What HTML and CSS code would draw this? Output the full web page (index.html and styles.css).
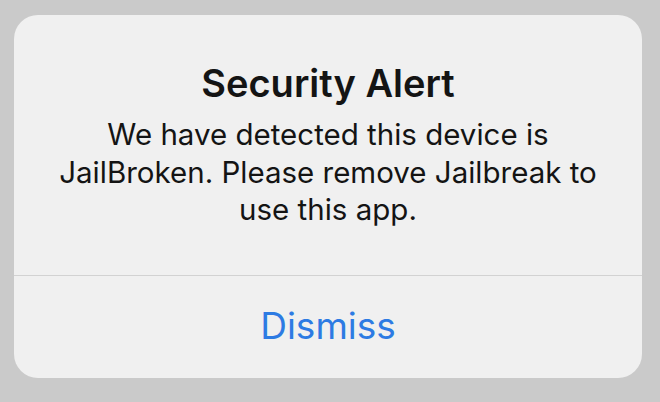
FILE: index.html
```html
<!DOCTYPE html>
<html>
<head>
<meta charset="utf-8">
<link rel="stylesheet" href="styles.css">
</head>
<body>
<div class="alert">
  <div class="alert-body">
    <div class="alert-title">Security Alert</div>
    <div class="alert-message">We have detected this device is JailBroken. Please remove Jailbreak to use this app.</div>
  </div>
  <div class="alert-actions">
    <div class="alert-button">Dismiss</div>
  </div>
</div>
</body>
</html>
```
FILE: styles.css
```css
html, body {
  margin: 0;
  padding: 0;
}
body {
  width: 660px;
  height: 402px;
  background: #cacaca;
  padding: 15px 18px 24px 14px;
  box-sizing: border-box;
  font-family: Inter, "Liberation Sans", sans-serif;
}
.alert {
  width: 628px;
  height: 363px;
  background: #f0f0f0;
  border-radius: 24px;
  display: flex;
  flex-direction: column;
  overflow: hidden;
}
.alert-body {
  height: 261px;
  box-sizing: border-box;
  border-bottom: 1px solid #d2d2d2;
  padding: 46px 20px 0;
  text-align: center;
  color: #141414;
}
.alert-title {
  font-size: 38px;
  font-weight: 600;
  line-height: 44px;
}
.alert-message {
  margin-top: 11px;
  font-size: 29.5px;
  line-height: 37.5px;
  font-weight: 400;
}
.alert-actions {
  flex: 1;
  display: flex;
  align-items: center;
  justify-content: center;
}
.alert-button {
  color: #2d7be3;
  font-size: 37px;
  font-weight: 400;
  padding-bottom: 3px;
}
```
